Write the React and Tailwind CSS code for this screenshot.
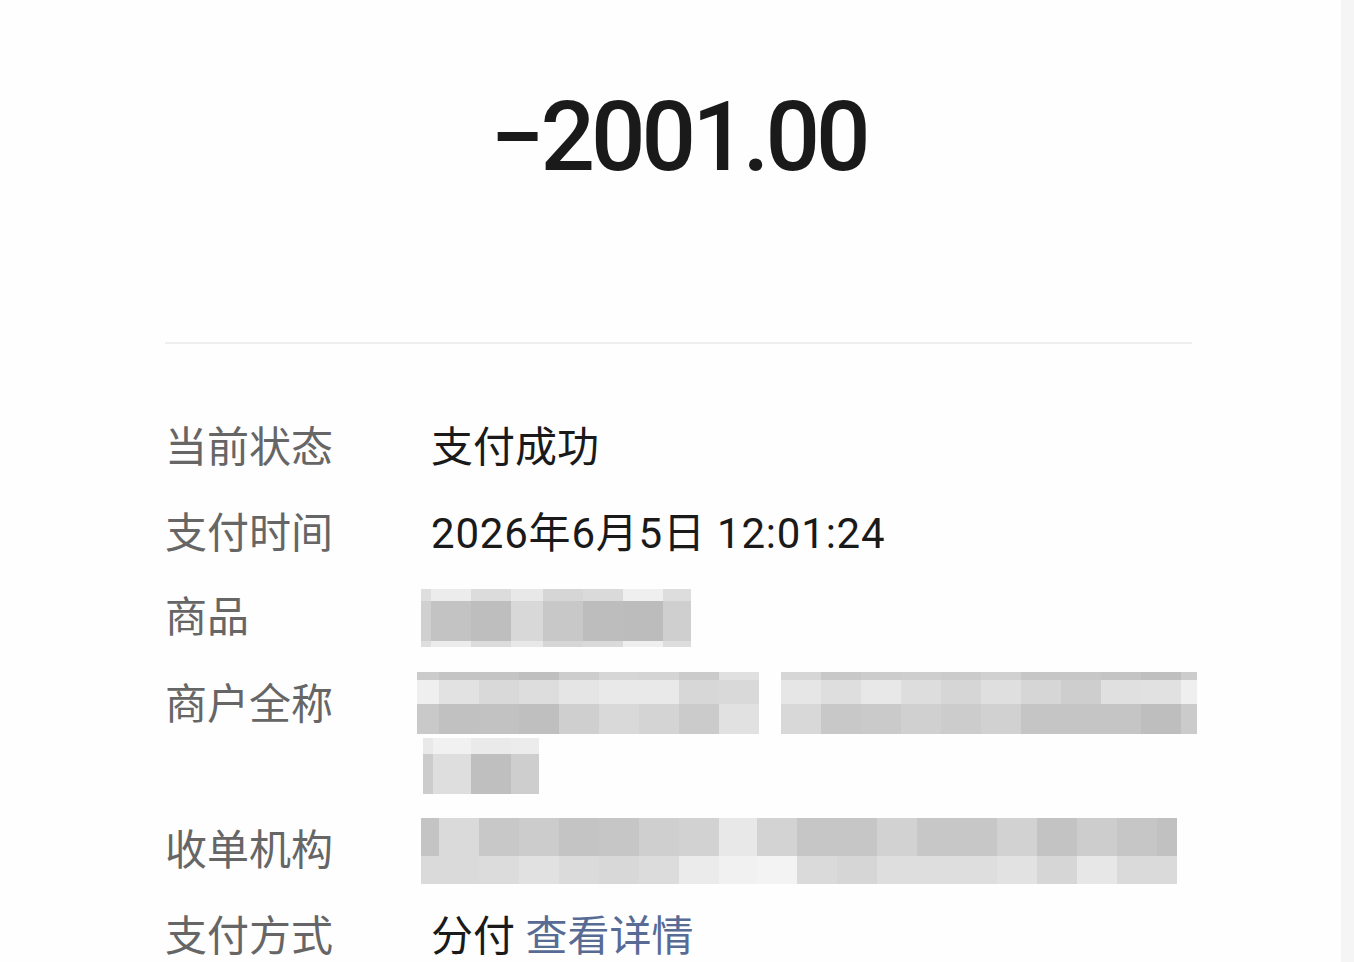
const font = { fontFamily: 'Roboto, "Noto Sans CJK SC", sans-serif' };

const Mosaic = ({ cols, rows, cells, className = '' }) => (
    <div className={`grid shrink-0 ${cols} ${rows} ${className}`}>
        {cells.map((c, i) => (
            <div key={i} className={c} />
        ))}
    </div>
);

const goodsCells = [
    'bg-[#dedede]', 'bg-[#ececec]', 'bg-[#dcdcdc]', 'bg-[#e8e8e8]', 'bg-[#d6d6d6]', 'bg-[#dadada]', 'bg-[#efefef]', 'bg-[#dddddd]',
    'bg-[#d0d0d0]', 'bg-[#c3c3c3]', 'bg-[#bebebe]', 'bg-[#d8d8d8]', 'bg-[#c8c8c8]', 'bg-[#bdbdbd]', 'bg-[#bcbcbc]', 'bg-[#cfcfcf]',
    'bg-[#dedede]', 'bg-[#ececec]', 'bg-[#dcdcdc]', 'bg-[#e8e8e8]', 'bg-[#d6d6d6]', 'bg-[#dadada]', 'bg-[#efefef]', 'bg-[#dddddd]',
];

const merchantA = [
    'bg-[#cbcbcb]', 'bg-[#c4c4c4]', 'bg-[#c4c4c4]', 'bg-[#bfbfbf]', 'bg-[#cdcdcd]', 'bg-[#d6d6d6]', 'bg-[#d4d4d4]', 'bg-[#cbcbcb]', 'bg-[#e0e0e0]',
    'bg-[#efefef]', 'bg-[#e2e2e2]', 'bg-[#d9d9d9]', 'bg-[#dddddd]', 'bg-[#e5e5e5]', 'bg-[#e9e9e9]', 'bg-[#e9e9e9]', 'bg-[#d7d7d7]', 'bg-[#d9d9d9]',
    'bg-[#c9c9c9]', 'bg-[#c1c1c1]', 'bg-[#c2c2c2]', 'bg-[#bfbfbf]', 'bg-[#cfcfcf]', 'bg-[#d9d9d9]', 'bg-[#d4d4d4]', 'bg-[#cbcbcb]', 'bg-[#e1e1e1]',
];

const merchantB = [
    'bg-[#d6d6d6]', 'bg-[#c8c8c8]', 'bg-[#cccccc]', 'bg-[#cecece]', 'bg-[#cbcbcb]', 'bg-[#d0d0d0]', 'bg-[#c6c6c6]', 'bg-[#c7c7c7]', 'bg-[#c4c4c4]', 'bg-[#bfbfbf]', 'bg-[#cccccc]',
    'bg-[#e6e6e6]', 'bg-[#dedede]', 'bg-[#e8e8e8]', 'bg-[#dddddd]', 'bg-[#d6d6d6]', 'bg-[#dfdfdf]', 'bg-[#d6d6d6]', 'bg-[#cecece]', 'bg-[#e0e0e0]', 'bg-[#e1e1e1]', 'bg-[#efefef]',
    'bg-[#d8d8d8]', 'bg-[#c8c8c8]', 'bg-[#cacaca]', 'bg-[#d0d0d0]', 'bg-[#cccccc]', 'bg-[#d1d1d1]', 'bg-[#c5c5c5]', 'bg-[#c5c5c5]', 'bg-[#c5c5c5]', 'bg-[#bebebe]', 'bg-[#cbcbcb]',
];

const merchantC = [
    'bg-[#e9e9e9]', 'bg-[#f1f1f1]', 'bg-[#eaeaea]', 'bg-[#ececec]',
    'bg-[#cccccc]', 'bg-[#dedede]', 'bg-[#bfbfbf]', 'bg-[#cecece]',
];

const acquirerCells = [
    'bg-[#c4c4c4]', 'bg-[#dadada]', 'bg-[#c8c8c8]', 'bg-[#cccccc]', 'bg-[#c4c4c4]', 'bg-[#c6c6c6]', 'bg-[#cfcfcf]', 'bg-[#d2d2d2]', 'bg-[#e8e8e8]', 'bg-[#d3d3d3]',
    'bg-[#c6c6c6]', 'bg-[#c6c6c6]', 'bg-[#d2d2d2]', 'bg-[#c7c7c7]', 'bg-[#c7c7c7]', 'bg-[#d2d2d2]', 'bg-[#c3c3c3]', 'bg-[#cdcdcd]', 'bg-[#c6c6c6]', 'bg-[#c1c1c1]',
    'bg-[#dadada]', 'bg-[#dadada]', 'bg-[#dcdcdc]', 'bg-[#e1e1e1]', 'bg-[#dbdbdb]', 'bg-[#d8d8d8]', 'bg-[#dcdcdc]', 'bg-[#ebebeb]', 'bg-[#f1f1f1]', 'bg-[#f3f3f3]',
    'bg-[#dadada]', 'bg-[#d6d6d6]', 'bg-[#dedede]', 'bg-[#dedede]', 'bg-[#dedede]', 'bg-[#e2e2e2]', 'bg-[#d6d6d6]', 'bg-[#e7e7e7]', 'bg-[#dadada]', 'bg-[#dadada]',
];

const Label = ({ children }) => (
    <div className="w-[266px] shrink-0 text-[42px] leading-[62px] text-[#666666]">{children}</div>
);

export default function App() {
    return (
        <div className="flex min-h-[962px] w-full bg-[#fefefe]" style={font}>
            <main className="min-w-0 flex-1 pl-[165px] pr-[149px]">
                <div className="pt-[89px] text-center text-[96px] font-medium leading-[96px] tracking-[-4px] text-[#1a1a1a]">
                    −2001.00
                </div>

                <div className="mt-[157px] h-[2px] bg-[#efefef]" />

                <div className="mt-[73px] flex flex-col text-[42px] leading-[62px] text-[#1a1a1a]">
                    <div className="flex">
                        <Label>当前状态</Label>
                        <div>支付成功</div>
                    </div>

                    <div className="mt-[24px] flex">
                        <Label>支付时间</Label>
                        <div className="tracking-[0.8px]">2026年6月5日 12:01:24</div>
                    </div>

                    <div className="mt-[22px] flex items-center">
                        <Label>商品</Label>
                        <Mosaic
                            className="-ml-[10px]"
                            cols="grid-cols-[10px_40px_40px_32px_40px_40px_40px_28px]"
                            rows="grid-rows-[12px_40px_6px]"
                            cells={goodsCells}
                        />
                    </div>

                    <div className="mt-[23px] flex items-start">
                        <div className="mt-[2px]">
                            <Label>商户全称</Label>
                        </div>
                        <div className="-ml-[14px] flex flex-col">
                            <div className="flex gap-[22px]">
                                <Mosaic
                                    cols="grid-cols-[22px_40px_40px_40px_40px_40px_40px_40px_40px]"
                                    rows="grid-rows-[8px_24px_30px]"
                                    cells={merchantA}
                                />
                                <Mosaic
                                    cols="grid-cols-[40px_40px_40px_40px_40px_40px_40px_40px_40px_40px_16px]"
                                    rows="grid-rows-[8px_24px_30px]"
                                    cells={merchantB}
                                />
                            </div>
                            <Mosaic
                                className="ml-[6px] mt-[4px] self-start"
                                cols="grid-cols-[10px_38px_40px_28px]"
                                rows="grid-rows-[16px_40px]"
                                cells={merchantC}
                            />
                        </div>
                    </div>

                    <div className="mt-[24px] flex items-center">
                        <Label>收单机构</Label>
                        <Mosaic
                            className="-ml-[10px]"
                            cols="grid-cols-[18px_40px_40px_40px_40px_40px_40px_40px_38px_40px_40px_40px_40px_40px_40px_40px_40px_40px_40px_20px]"
                            rows="grid-rows-[38px_28px]"
                            cells={acquirerCells}
                        />
                    </div>

                    <div className="mt-[22px] flex">
                        <Label>支付方式</Label>
                        <div>
                            分付 <span className="text-[#576b95]">查看详情</span>
                        </div>
                    </div>
                </div>
            </main>
            <div className="w-[13px] shrink-0 bg-[#f5f5f5]" />
        </div>
    );
}
